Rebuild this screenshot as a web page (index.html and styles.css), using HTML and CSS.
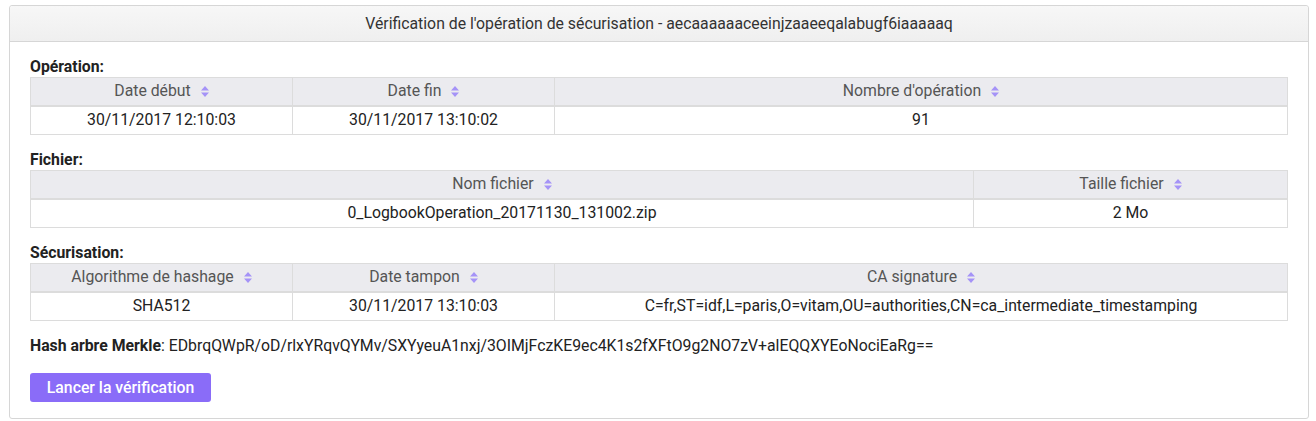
FILE: index.html
```html
<!DOCTYPE html>
<html lang="fr">
<head>
<meta charset="utf-8">
<title>Vérification</title>
<link rel="stylesheet" href="styles.css">
</head>
<body>
<div class="panel">
  <div class="panel-heading">Vérification de l'opération de sécurisation - aecaaaaaaceeinjzaaeeqalabugf6iaaaaaq</div>
  <div class="panel-body">
    <div class="label">Opération:</div>
    <table class="grid">
      <colgroup><col style="width:262px"><col style="width:262px"><col></colgroup>
      <thead><tr>
        <th>Date début<span class="sort"><svg width="8" height="11" viewBox="0 0 8 11"><path d="M4 0L8 4.5H0Z M4 11L0 6.5H8Z" fill="#a593f7"/></svg></span></th>
        <th>Date fin<span class="sort"><svg width="8" height="11" viewBox="0 0 8 11"><path d="M4 0L8 4.5H0Z M4 11L0 6.5H8Z" fill="#a593f7"/></svg></span></th>
        <th>Nombre d'opération<span class="sort"><svg width="8" height="11" viewBox="0 0 8 11"><path d="M4 0L8 4.5H0Z M4 11L0 6.5H8Z" fill="#a593f7"/></svg></span></th>
      </tr></thead>
      <tbody><tr><td>30/11/2017 12:10:03</td><td>30/11/2017 13:10:02</td><td>91</td></tr></tbody>
    </table>

    <div class="label">Fichier:</div>
    <table class="grid">
      <colgroup><col style="width:943px"><col></colgroup>
      <thead><tr>
        <th>Nom fichier<span class="sort"><svg width="8" height="11" viewBox="0 0 8 11"><path d="M4 0L8 4.5H0Z M4 11L0 6.5H8Z" fill="#a593f7"/></svg></span></th>
        <th>Taille fichier<span class="sort"><svg width="8" height="11" viewBox="0 0 8 11"><path d="M4 0L8 4.5H0Z M4 11L0 6.5H8Z" fill="#a593f7"/></svg></span></th>
      </tr></thead>
      <tbody><tr><td>0_LogbookOperation_20171130_131002.zip</td><td>2 Mo</td></tr></tbody>
    </table>

    <div class="label">Sécurisation:</div>
    <table class="grid">
      <colgroup><col style="width:262px"><col style="width:262px"><col></colgroup>
      <thead><tr>
        <th>Algorithme de hashage<span class="sort"><svg width="8" height="11" viewBox="0 0 8 11"><path d="M4 0L8 4.5H0Z M4 11L0 6.5H8Z" fill="#a593f7"/></svg></span></th>
        <th>Date tampon<span class="sort"><svg width="8" height="11" viewBox="0 0 8 11"><path d="M4 0L8 4.5H0Z M4 11L0 6.5H8Z" fill="#a593f7"/></svg></span></th>
        <th>CA signature<span class="sort"><svg width="8" height="11" viewBox="0 0 8 11"><path d="M4 0L8 4.5H0Z M4 11L0 6.5H8Z" fill="#a593f7"/></svg></span></th>
      </tr></thead>
      <tbody><tr><td>SHA512</td><td>30/11/2017 13:10:03</td><td>C=fr,ST=idf,L=paris,O=vitam,OU=authorities,CN=ca_intermediate_timestamping</td></tr></tbody>
    </table>

    <div class="hash"><b>Hash arbre Merkle</b>: EDbrqQWpR/oD/rlxYRqvQYMv/SXYyeuA1nxj/3OIMjFczKE9ec4K1s2fXFtO9g2NO7zV+alEQQXYEoNociEaRg==</div>

    <button class="btn">Lancer la vérification</button>
  </div>
</div>
</body>
</html>
```

FILE: styles.css
```css
* { box-sizing: border-box; }
body {
  margin: 0;
  padding: 5px 8px 0 9px;
  font-family: Roboto, "Liberation Sans", sans-serif;
  font-size: 15.8px;
  color: #222;
  background: #fff;
}
.panel {
  border: 1px solid #d6d6d6;
  border-radius: 3px;
  width: 1300px;
  background: #fff;
}
.panel-heading {
  height: 36px;
  line-height: 35px;
  text-align: center;
  color: #333;
  background: linear-gradient(#f7f7f7, #efefef);
  border-bottom: 1px solid #d6d6d6;
  border-radius: 3px 3px 0 0;
}
.panel-body {
  padding: 0 20px 16px 20px;
}
.label {
  font-weight: 700;
  margin-top: 15px;
  height: 20px;
  line-height: 20px;
  color: #222;
}
.grid {
  width: 1258px;
  border-collapse: collapse;
  table-layout: fixed;
}
.grid th, .grid td {
  border: 1px solid #dcdcdc;
  text-align: center;
  padding: 0 8px;
  font-weight: 400;
  white-space: nowrap;
  line-height: 20px;
}
.grid th {
  height: 28px;
  background: #ebebef;
  color: #555;
  border-bottom: 2px solid #dcdcdc;
}
.grid td { color: #222; height: 29px; }
.sort {
  display: inline-block;
  margin-left: 10px;
  vertical-align: -1px;
}
.sort svg { display: block; }
.hash {
  margin-top: 15px;
  line-height: 20px;
  color: #222;
}
.btn {
  display: block;
  margin-top: 17px;
  width: 181px;
  height: 29px;
  border: none;
  border-radius: 3px;
  background: #8a6cf8;
  color: #fff;
  font-family: Roboto, "Liberation Sans", sans-serif;
  font-size: 15.8px;
  font-weight: 500;
  padding: 0;
}
```
